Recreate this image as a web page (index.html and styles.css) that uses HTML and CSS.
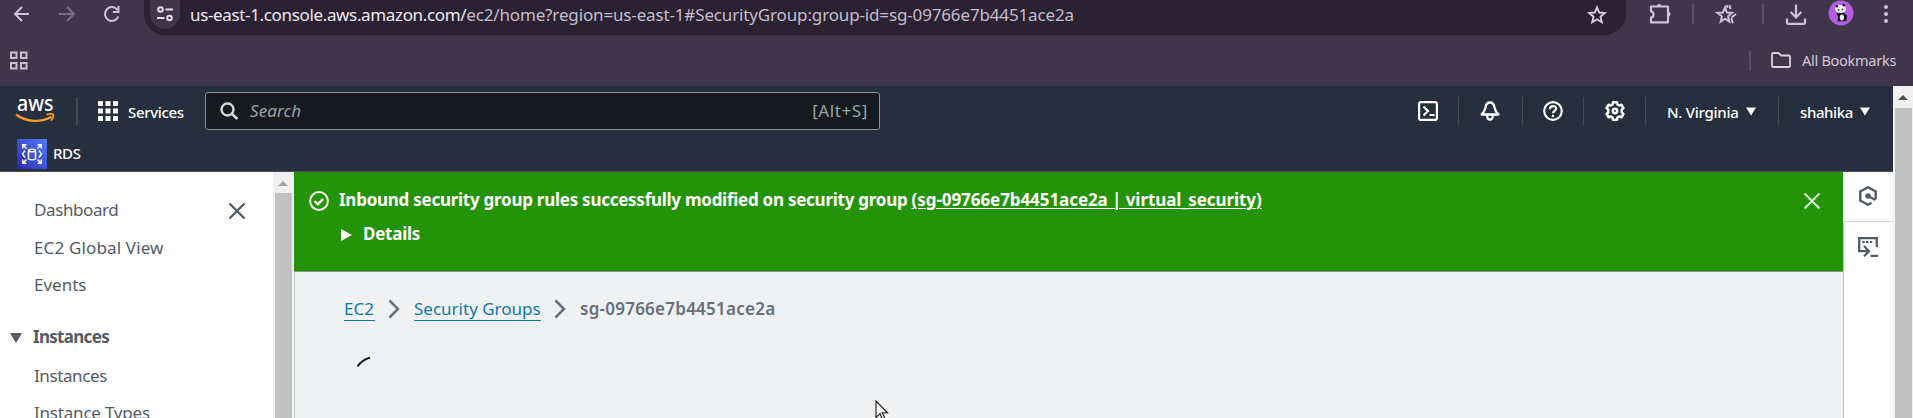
FILE: index.html
```html
<!DOCTYPE html>
<html lang="en">
<head>
<meta charset="utf-8">
<title>Security group | EC2</title>
<link rel="stylesheet" href="styles.css">
</head>
<body>
<div class="browser">
  <div class="toolbar">
    <svg class="ic back" width="18" height="18" viewBox="0 0 18 18"><path d="M16 9H2.500M9 2L2 9l7 7" fill="none" stroke="#d0c1da" stroke-width="2"/></svg>
    <svg class="ic forward" width="18" height="18" viewBox="0 0 18 18"><path d="M1 9h14.500M9 2l7 7-7 7" fill="none" stroke="#7b6e86" stroke-width="2"/></svg>
    <svg class="ic reload" width="18" height="18" viewBox="0 0 18 18"><path d="M15.300 11.500A6.900 6.900 0 1 1 14.500 5" fill="none" stroke="#d0c1da" stroke-width="2"/><path d="M15.500 1v6H9.800" fill="none" stroke="#d0c1da" stroke-width="2"/></svg>
    <div class="omnibox">
      <span class="siteinfo"><svg width="18" height="18" viewBox="0 0 18 18" fill="none" stroke="#e6dcec" stroke-width="2"><circle cx="4.500" cy="4.500" r="2.300"/><path d="M9.500 4.500H17M1 13h7.500"/><circle cx="13.500" cy="13" r="2.300"/></svg></span>
      <span class="url"><span class="host">us-east-1.console.aws.amazon.com/</span><span class="path">ec2/home?region=us-east-1#SecurityGroup:group-id=sg-09766e7b4451ace2a</span></span>
      <svg class="star" width="20" height="20" viewBox="0 0 20 20"><path d="M10 2.300l2.200 5.200 5.600.5-4.300 3.700 1.300 5.500L10 14.300l-4.800 2.900 1.300-5.500L2.200 8l5.600-.5z" fill="none" stroke="#d9ccdf" stroke-width="1.900"/></svg>
    </div>
    <svg class="ic ext" width="22" height="22" viewBox="0 0 22 22"><path d="M2 3.500h17v15.800H2v-4.800c3.400-.3 3.400-5.700 0-6z" fill="none" stroke="#d0c1da" stroke-width="2.200" stroke-linejoin="round"/><path d="M7.800 3.500a2.500 2.500 0 0 1 5 0zM19 8.500a2.500 2.500 0 0 1 0 5z" fill="#d0c1da"/></svg>
    <span class="vsep s1"></span>
    <svg class="ic fav" width="22" height="22" viewBox="0 0 22 22" fill="none" stroke="#d0c1da" stroke-width="2"><path d="M10 3.500l2 5 5 .4-3.900 3.400 1.200 5.200-4.300-2.800-4.300 2.800 1.200-5.200L2.500 8.900l5.400-.4z"/><path d="M11.500 1l1.200 3M14.500 1l1 4M21 10l-4.500 3.500M16.300 14l1.600 5.200"/></svg>
    <span class="vsep s2"></span>
    <svg class="ic dl" width="22" height="22" viewBox="0 0 22 22" fill="none" stroke="#d0c1da" stroke-width="2.200"><path d="M11 .5v12.500M5.700 8l5.300 5.500L16.300 8M2 14.500v4.300a1 1 0 0 0 1 1h16a1 1 0 0 0 1-1v-4.300"/></svg>
    <svg class="ic avatar" width="26" height="26" viewBox="0 0 26 26"><circle cx="13" cy="13" r="12.500" fill="#b35fe0"/><ellipse cx="12.500" cy="9" rx="5.500" ry="4" fill="#f4f1f5"/><circle cx="8.800" cy="6.200" r="1.200" fill="#222"/><circle cx="15.800" cy="5.300" r="1.200" fill="#222"/><circle cx="10.500" cy="9.800" r=".9" fill="#222"/><circle cx="14.500" cy="9.300" r=".9" fill="#222"/><path d="M8.500 13.300l7.500-.5 3 3-.5 5.500H9.300l1-4z" fill="#17131b"/><ellipse cx="13.900" cy="17.500" rx="2.100" ry="3" fill="#eee"/></svg>
    <svg class="ic dots" width="6" height="20" viewBox="0 0 6 20" fill="#d0c1da"><circle cx="3" cy="3" r="2"/><circle cx="3" cy="10" r="2"/><circle cx="3" cy="17" r="2"/></svg>
  </div>
  <div class="bookmarks">
    <svg class="apps" width="19" height="19" viewBox="0 0 19 19" fill="none" stroke="#c9bdd0" stroke-width="2"><path d="M2 1.500h5.500v5.500H2zM12 1.500h5.500v5.500H12zM2 12h5.500v5.500H2zM12 12h5.500v5.500H12z"/></svg>
    <span class="vsep s3"></span>
    <svg class="folder" width="22" height="18" viewBox="0 0 22 18"><path d="M3 2h5.500l2.500 2.500h8a1 1 0 0 1 1 1V15a1 1 0 0 1-1 1H3a1 1 0 0 1-1-1V3a1 1 0 0 1 1-1z" fill="none" stroke="#d9cfdd" stroke-width="1.800"/></svg>
    <span class="allbm">All Bookmarks</span>
  </div>
</div>
<div class="page">
  <div class="console">
    <header class="nav">
      <div class="navrow">
        <svg class="aws" width="42" height="28" viewBox="0 0 42 28"><text x="2" y="14" class="awstext" textLength="36.500" lengthAdjust="spacingAndGlyphs">aws</text><path d="M1 17.500c10.500 8 25 8.300 35.300 2.300" fill="none" stroke="#f39c2d" stroke-width="2.300"/><path d="M31.500 17.600c4-1.200 6.800-.9 7 0 .2 1.500-.8 4.200-2.500 6" fill="none" stroke="#f39c2d" stroke-width="1.800"/></svg>
        <span class="nsep"></span>
        <svg class="grid" width="20" height="20" viewBox="0 0 20 20" fill="#fff"><path d="M0 0h5v5H0zM7.500 0h5v5h-5zM15 0h5v5h-5zM0 7.500h5v5H0zM7.500 7.500h5v5h-5zM15 7.500h5v5h-5zM0 15h5v5H0zM7.500 15h5v5h-5zM15 15h5v5h-5z"/></svg>
        <span class="services">Services</span>
        <div class="search">
          <svg width="19" height="19" viewBox="0 0 19 19" fill="none" stroke="#d5dbdb" stroke-width="2.400"><circle cx="7.500" cy="7.500" r="6"/><path d="M12 12l5.500 5"/></svg>
          <span class="ph">Search</span><span class="key">[Alt+S]</span>
        </div>
        <svg class="n1" width="20" height="20" viewBox="0 0 20 20" fill="none" stroke="#fff" stroke-width="2.200"><rect x="1.100" y="1.100" width="17.800" height="17.800" rx="2"/><path d="M5.500 5.500L10 10l-4.500 4.500M11.500 14h5"/></svg>
        <span class="isep g1"></span>
        <svg class="n2" width="20" height="20" viewBox="0 0 20 20" fill="none" stroke="#fff" stroke-width="2.300" stroke-linejoin="round"><path d="M1.500 13.500h17C15.500 10.500 15 9 14.500 6.500c-.5-3.200-2-5-4.500-5s-4 1.800-4.500 5C5 9 4.500 10.500 1.500 13.500zM7.200 14.500c0 5.600 5.600 5.600 5.600 0"/></svg>
        <span class="isep g2"></span>
        <svg class="n3" width="20" height="20" viewBox="0 0 20 20" fill="none" stroke="#fff" stroke-width="2.200"><circle cx="10" cy="10" r="8.800"/><path d="M6.900 8.200c0-4 6.200-4 6.200-.5 0 2.300-3.100 2-3.100 4.500M10 13.700v2.200"/></svg>
        <span class="isep g3"></span>
        <svg class="n4" width="20" height="20" viewBox="0 0 20 20" fill="none" stroke="#fff" stroke-width="2.500" stroke-linejoin="round"><path d="M8 1.300h4l.5 2.300 1.600.9 2.300-.8 2 3.300-1.700 1.700v2.600l1.700 1.700-2 3.300-2.300-.8-1.600.9-.5 2.300H8l-.5-2.300-1.600-.9-2.300.8-2-3.300 1.700-1.700V8.700L1.600 7l2-3.300 2.300.8 1.600-.9z"/><circle cx="10" cy="10" r="2.200"/></svg>
        <span class="isep g4"></span>
        <span class="region">N. Virginia</span><svg class="t1" width="10" height="9" viewBox="0 0 10 9"><path d="M0 .5h10L5 8.500z" fill="#fff"/></svg>
        <span class="isep g5"></span>
        <span class="user">shahika</span><svg class="t1" width="10" height="9" viewBox="0 0 10 9"><path d="M0 .5h10L5 8.500z" fill="#fff"/></svg>
      </div>
      <div class="favrow">
        <svg width="30" height="30" viewBox="0 0 30 30"><defs><linearGradient id="rds" x1="0" y1="1" x2="1" y2="0"><stop offset="0" stop-color="#2e27ad"/><stop offset="1" stop-color="#527fff"/></linearGradient></defs><path d="M0 0h30v30H0z" fill="url(#rds)"/><g fill="none" stroke="#fff" stroke-width="1.400"><path d="M5.700 9.500V5.700h3.800M5.700 5.700l3.800 3.800M20.500 5.700h3.800v3.800M24.300 5.700l-3.800 3.800M5.700 20.500v3.800h3.800M5.700 24.300l3.800-3.800M24.300 20.500v3.800h-3.800M24.300 24.300l-3.800-3.800M8 11.500L5.500 15 8 18.500M22 11.500l2.500 3.500-2.500 3.500"/><path d="M11.500 11.500v8c0 1.600 7 1.600 7 0v-8"/><ellipse cx="15" cy="11.500" rx="3.500" ry="1.300"/></g></svg>
        <span class="rds">RDS</span>
      </div>
    </header>
    <div class="main">
      <nav class="side">
        <div class="links">
          <div class="siderow first"><a class="l1">Dashboard</a><svg width="18" height="18" viewBox="0 0 18 18"><path d="M1.500 1.500l15 15M16.500 1.500l-15 15" stroke="#545b64" stroke-width="2.400"/></svg></div>
          <a class="l2">EC2 Global View</a>
          <a class="l3">Events</a>
          <div class="siderow group"><svg width="12" height="10" viewBox="0 0 12 10"><path d="M0 0h12L6 10z" fill="#545b64"/></svg><b>Instances</b></div>
          <a class="l4">Instances</a>
          <a class="l5">Instance Types</a>
        </div>
        <div class="sbar"><i class="up"></i><i class="thumb"></i></div>
      </nav>
      <main class="content">
        <section class="flash">
          <svg class="ok" width="20" height="20" viewBox="0 0 20 20" fill="none" stroke="#f2fff0" stroke-width="2"><circle cx="10" cy="10" r="8.900"/><path d="M5.500 10l3.300 3.200 5.400-5.400" stroke-width="2.400"/></svg>
          <div class="msg">
            <div class="line1"><span class="m1">Inbound security group rules successfully modified on security group </span><a class="m2">(sg-09766e7b4451ace2a | virtual_security)</a></div>
            <div class="line2"><svg width="11" height="12" viewBox="0 0 11 12"><path d="M0 0l11 6-11 6z" fill="#fff"/></svg><span>Details</span></div>
          </div>
          <svg class="close" width="18" height="18" viewBox="0 0 18 18"><path d="M1.500 1.500l15 15M16.500 1.500l-15 15" stroke="#d3ead0" stroke-width="2.200"/></svg>
        </section>
        <section class="body">
          <div class="crumbs"><a class="c1">EC2</a><svg width="12" height="20" viewBox="0 0 12 20"><path d="M1.500 1.500L10 10l-8.500 8.500" fill="none" stroke="#687078" stroke-width="2.500"/></svg><a class="c2">Security Groups</a><svg width="12" height="20" viewBox="0 0 12 20"><path d="M1.500 1.500L10 10l-8.500 8.500" fill="none" stroke="#687078" stroke-width="2.500"/></svg><span class="c3">sg-09766e7b4451ace2a</span></div>
          <svg class="spin" width="16" height="12" viewBox="0 0 16 12"><path d="M1.500 10.500C4 6.500 8 3.500 14 1.500" fill="none" stroke="#16191f" stroke-width="2"/></svg>
        </section>
      </main>
      <aside class="tools">
        <div class="tool"><svg width="18" height="20" viewBox="0 0 18 20" fill="none" stroke="#545b64" stroke-width="2.400"><path d="M16.700 13.200V5.500L9 1.300 1.300 5.500v9L9 18.700l3.500-2"/><circle cx="9" cy="10" r="2" fill="#545b64" stroke-width="1.500"/><path d="M9 10l7.500 4"/></svg></div>
        <div class="tool2"><svg width="20" height="20" viewBox="0 0 20 20" fill="none" stroke="#545b64" stroke-width="2.300"><path d="M18.800 10V1.200H1.200v13h9M6 9l5 5.200L6 19.200M12.500 18.800H20"/><path d="M4.200 5h10" stroke-dasharray="2.400 1.400" stroke-width="2.200"/></svg></div>
      </aside>
    </div>
  </div>
  <div class="sbar outer"><i class="up"></i><i class="thumb"></i></div>
</div>
<svg class="cursor" width="14" height="22" viewBox="0 0 14 22"><path d="M1 1v16.500l4-3.800 2.600 6 2.400-1-2.600-5.900h5.100z" fill="#fff" stroke="#111" stroke-width="1.100"/></svg>
</body>
</html>
```

FILE: styles.css
```css
* { box-sizing: border-box; }
body { margin: 0; width: 1913px; height: 418px; overflow: hidden; background: #fff; font-family: "Noto Sans", "Open Sans", sans-serif; font-size: 17px; line-height: 24px; white-space: nowrap; }
svg { display: block; flex: none; }
.browser { height: 86px; background: #40364c; }
.toolbar { display: flex; height: 35px; }
.ic { margin-top: 5px; }
.back { margin-left: 13px; }
.forward { margin-left: 27px; }
.reload { margin-left: 27px; }
.omnibox { display: flex; width: 1482px; height: 35px; margin-left: 23px; background: #2a2233; border-radius: 0 0 21px 21px; }
.siteinfo { width: 30px; height: 29px; margin-left: 6px; background: #40364c; border-radius: 0 0 15px 15px; display: flex; justify-content: center; padding-top: 5px; }
.url { width: 1396px; margin: 3px 0 0 10px; flex: none; }
.host { color: #efe8f3; letter-spacing: -.35px; }
.path { color: #c6bccd; letter-spacing: -.146px; }
.star { margin: 5px 0 0 1px; }
.ext { margin: 3px 0 0 23px; }
.vsep { width: 2px; height: 20px; background: #5a4e67; flex: none; }
.s1 { margin: 4px 0 0 21px; }
.fav { margin: 4px 0 0 21px; }
.s2 { margin: 4px 0 0 25px; }
.dl { margin: 4px 0 0 21px; }
.avatar { margin: 0 0 0 21px; }
.dots { margin: 4px 0 0 29px; }
.bookmarks { display: flex; padding-top: 16px; height: 51px; }
.apps { margin-left: 9px; }
.s3 { margin-left: 1721px; }
.folder { margin: 0 0 0 19px; }
.allbm { margin: -3px 0 0 10px; color: #d3c7d9; font-size: 14.5px; letter-spacing: -.27px; }
.page { display: flex; height: 332px; }
.console { width: 1893px; flex: none; }
.nav { height: 86px; background: #252f3d; border-bottom: 1px solid #48515c; color: #fff; font-size: 15px; font-weight: 500; }
.navrow { display: flex; height: 50px; }
.aws { margin: 11px 0 0 15px; overflow: visible; }
.awstext { font: 500 22px "Noto Sans", sans-serif; fill: #fff; }
.nsep { width: 2px; height: 28px; margin: 11px 0 0 19px; background: #414a56; }
.grid { margin: 15px 0 0 20px; }
.services { width: 77px; margin: 14px 0 0 10px; letter-spacing: -.35px; }
.search { display: flex; width: 675px; height: 38px; margin-top: 6px; border: 1px solid #859296; border-radius: 3px; background: #161a1e; padding: 0 11px 0 14px; font-size: 17px; font-weight: 400; color: #95a5a6; }
.search svg { margin-top: 9px; }
.ph { margin: 6px 0 0 11px; font-style: italic; letter-spacing: .1px; }
.key { margin: 6px 0 0 auto; letter-spacing: .6px; }
.navrow .n1 { margin: 15px 0 0 538px; }
.n2, .n3, .n4 { margin-top: 15px; }
.isep { width: 1px; height: 28px; background: #414a56; margin-top: 11px; }
.g1 { margin-left: 20px; margin-right: 21px; }
.g2 { margin-left: 22px; margin-right: 20px; }
.g3 { margin-left: 20px; margin-right: 21px; }
.g4 { margin-left: 20px; margin-right: 21px; }
.g5 { margin-left: 22px; margin-right: 21px; }
.region { width: 79px; margin-top: 14px; letter-spacing: -.27px; }
.user { width: 60px; margin-top: 14px; letter-spacing: -.4px; }
.t1 { margin-top: 21px; }
.favrow { display: flex; padding: 3px 0 0 17px; }
.rds { margin: 2px 0 0 6px; letter-spacing: -.4px; }
.main { display: flex; height: 246px; }
.side { display: flex; width: 294px; flex: none; color: #545b64; }
.links { width: 273px; padding: 26px 0 0 34px; display: flex; flex-direction: column; }
.links a { height: 24px; flex: none; }
.siderow { display: flex; height: 24px; flex: none; }
.first svg { margin: 4px 0 0 auto; }
.first { padding-right: 27px; }
.l1, .l4 { letter-spacing: -.4px; }
.l2 { margin-top: 14px; letter-spacing: .15px; }
.links .l3 { margin-top: 13px; }
.group { margin: 28px 0 0 -24px; }
.group svg { margin-top: 8px; }
.group b { margin-left: 11px; letter-spacing: -.7px; }
.l4 { margin-top: 15px; }
.l5 { margin-top: 13px; letter-spacing: -.2px; }
.sbar { width: 21px; background: #f1f0f0; display: flex; flex-direction: column; align-items: center; border-right: 1px solid #f7f7f7; }
.up { width: 0; height: 0; border: 5px solid transparent; border-top: 0; border-bottom-color: #a3a3a3; margin-top: 9px; }
.thumb { width: 17px; height: 240px; background: #c1c1c1; margin-top: 7px; flex: none; }
.outer { width: 20px; height: 332px; border: 0; }
.outer .up { border-bottom-color: #505050; }
.outer .thumb { height: 320px; margin-top: 8px; }
.content { width: 1549px; flex: none; }
.flash { display: flex; height: 100px; background: #259308; border-bottom: 1px solid #829b85; color: #fff; font-weight: 700; padding-left: 15px; }
.ok { margin-top: 19px; }
.msg { width: 1464px; margin-left: 10px; padding-top: 16px; flex: none; }
.m1 { letter-spacing: -.26px; white-space: pre; }
.m2 { letter-spacing: -.07px; text-decoration: underline; text-decoration-thickness: 1px; text-underline-offset: 2px; }
.line2 { display: flex; margin-top: 10px; letter-spacing: -.25px; }
.line2 svg { margin: 7px 11px 0 2px; }
.close { margin-top: 20px; }
.body { height: 146px; background: #f0f1f3; border-left: 1px solid #c0c7ca; padding: 25px 0 0 49px; }
.crumbs { display: flex; color: #687078; }
.crumbs a { color: #0f78ab; height: 24px; border-bottom: 1px solid #0f78ab; }
.crumbs svg { margin: 2px 14px 0 13px; }
.c1 { width: 31px; }
.c2 { width: 127px; }
.c3 { font-weight: 600; letter-spacing: .25px; }
.spin { margin: 35px 0 0 12px; }
.tools { width: 50px; }
.tool { height: 50px; border-bottom: 1px solid #d5dbdb; padding: 14px 0 0 16px; }
.tool2 { height: 196px; border-left: 1px solid #c0c7ca; padding: 15px 0 0 14px; }
.cursor { position: absolute; left: 875px; top: 400px; }
```
